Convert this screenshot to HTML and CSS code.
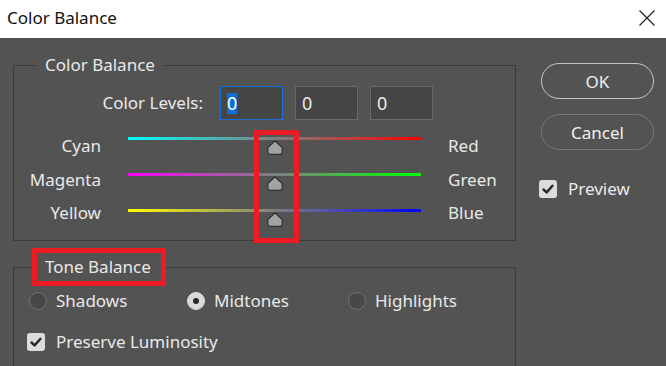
FILE: index.html
```html
<!DOCTYPE html>
<html lang="en">
<head>
<meta charset="utf-8">
<title>Color Balance</title>
<link rel="stylesheet" href="styles.css">
</head>
<body>
<div class="dialog">
  <header class="titlebar">
    <span class="title">Color Balance</span>
    <svg class="close" width="18" height="18" viewBox="0 0 18 18"><path d="M1.5 1.5L16.5 16.5M16.5 1.5L1.5 16.5" stroke="#1a1a1a" stroke-width="1.1" fill="none"/></svg>
  </header>
  <div class="content">
    <div class="main">
      <fieldset class="group cb">
        <legend class="legend">Color Balance</legend>
        <div class="levels">
          <span class="levels-label">Color Levels:</span>
          <div class="num active"><span class="sel">0</span></div>
          <div class="num">0</div>
          <div class="num">0</div>
        </div>
        <div class="sliders">
          <div class="row r1">
            <span class="lbl lbl-l">Cyan</span>
            <div class="track cyan-red">
              <svg class="thumb" width="16" height="15" viewBox="0 0 16 15"><path d="M8 0.8 L15.2 7.6 V12.3 Q15.2 14.3 13.2 14.3 H2.8 Q0.8 14.3 0.8 12.3 V7.6 Z" fill="#a2a2a2" stroke="#2d2d2d" stroke-width="1.2" stroke-linejoin="round"/></svg>
            </div>
            <span class="lbl lbl-r">Red</span>
          </div>
          <div class="row r2">
            <span class="lbl lbl-l">Magenta</span>
            <div class="track magenta-green">
              <svg class="thumb" width="16" height="15" viewBox="0 0 16 15"><path d="M8 0.8 L15.2 7.6 V12.3 Q15.2 14.3 13.2 14.3 H2.8 Q0.8 14.3 0.8 12.3 V7.6 Z" fill="#a2a2a2" stroke="#2d2d2d" stroke-width="1.2" stroke-linejoin="round"/></svg>
            </div>
            <span class="lbl lbl-r">Green</span>
          </div>
          <div class="row r3">
            <span class="lbl lbl-l">Yellow</span>
            <div class="track yellow-blue">
              <svg class="thumb" width="16" height="15" viewBox="0 0 16 15"><path d="M8 0.8 L15.2 7.6 V12.3 Q15.2 14.3 13.2 14.3 H2.8 Q0.8 14.3 0.8 12.3 V7.6 Z" fill="#a2a2a2" stroke="#2d2d2d" stroke-width="1.2" stroke-linejoin="round"/></svg>
            </div>
            <span class="lbl lbl-r">Blue</span>
          </div>
          <div class="mark-thumbs"></div>
        </div>
      </fieldset>
      <fieldset class="group tb">
        <legend class="legend marked">Tone Balance</legend>
        <div class="radios">
          <label class="opt w1"><span class="radio"></span>Shadows</label>
          <label class="opt w2"><span class="radio on"></span>Midtones</label>
          <label class="opt"><span class="radio"></span>Highlights</label>
        </div>
        <label class="check lum">
          <span class="box"><svg width="18" height="18" viewBox="0 0 18 18"><path d="M4.5 9.5L7.6 12.4L13.5 5.8" stroke="#262626" stroke-width="2.4" fill="none" stroke-linecap="round" stroke-linejoin="round"/></svg></span>
          Preserve Luminosity
        </label>
      </fieldset>
    </div>
    <aside class="side">
      <button class="btn ok">OK</button>
      <button class="btn cancel">Cancel</button>
      <label class="check preview">
        <span class="box"><svg width="18" height="18" viewBox="0 0 18 18"><path d="M4.5 9.5L7.6 12.4L13.5 5.8" stroke="#262626" stroke-width="2.4" fill="none" stroke-linecap="round" stroke-linejoin="round"/></svg></span>
        Preview
      </label>
    </aside>
  </div>
</div>
</body>
</html>
```

FILE: styles.css
```css
* { box-sizing: border-box; }

html, body {
  margin: 0;
  height: 100%;
  overflow: hidden;
}

body {
  background: #535353;
  font-family: "Noto Sans", "Open Sans", sans-serif;
  color: #e9e9e9;
  font-size: 17px;
  line-height: 20px;
}

.titlebar {
  height: 38px;
  background: #ffffff;
  display: flex;
  align-items: center;
  justify-content: space-between;
  padding: 0 10px 0 7px;
}

.title {
  color: #111;
  font-size: 17px;
  line-height: 24px;
  margin-top: -2px;
}

.close { margin-top: -3px; }

.content {
  display: flex;
  padding: 17px 0 0 13px;
}

.main {
  width: 503px;
  display: flex;
  flex-direction: column;
}

.group {
  margin: 0;
  padding: 0;
  border: 1px solid #3a3a3a;
  min-width: 0;
}

.legend {
  padding: 0 9px;
  margin-left: 22px;
  line-height: 20px;
  font-size: 17px;
}

.levels {
  display: flex;
  align-items: center;
  margin-top: 11px;
}

.levels-label {
  width: 189px;
  text-align: right;
  margin-right: 17px;
}

.num {
  width: 63px;
  height: 34px;
  background: #454545;
  border: 1px solid #696969;
  margin-right: 12px;
  padding-left: 6px;
  display: flex;
  align-items: center;
  font-size: 18px;
}

.num.active {
  border-color: #1b6fd9;
}

.sel {
  background: #0f6fd6;
  color: #fff;
  line-height: 21px;
}

.sliders {
  position: relative;
  margin-top: 16px;
}

.row {
  display: grid;
  grid-template-columns: 87px 293px auto;
  column-gap: 27px;
  align-items: start;
  height: 36px;
}

.row.r2 .lbl { margin-top: -2px; }
.row.r3 .lbl { margin-top: -5px; }
.row.r3 { height: 32px; }

.lbl-l { text-align: right; }

.track {
  position: relative;
  height: 3px;
  margin-top: 1px;
}

.cyan-red { background: linear-gradient(to right, #00ffff, #ff0000); }
.magenta-green { background: linear-gradient(to right, #ff00ff, #00ff00); }
.yellow-blue { background: linear-gradient(to right, #ffff00, #0000ff); }

.thumb {
  position: absolute;
  top: 3px;
  left: calc(50% - 8px);
  display: block;
}

.mark-thumbs {
  position: absolute;
  left: 240px;
  top: -6px;
  width: 45px;
  height: 113px;
  border: 5px solid #ed1c24;
}

.tb {
  margin-top: 7px;
  padding-bottom: 60px;
}

.legend.marked {
  margin-left: 18px;
  padding: 4px 10px 4px 8px;
  border: 5px solid #ed1c24;
}

.radios {
  display: flex;
  align-items: center;
  margin-top: 5px;
  padding-left: 15px;
}

.opt {
  display: flex;
  align-items: center;
  gap: 9px;
}

.opt.w1 { width: 158px; }
.opt.w2 { width: 161px; }

.radio {
  width: 18px;
  height: 18px;
  border-radius: 50%;
  background: #484848;
  border: 1px solid #717171;
  display: flex;
  align-items: center;
  justify-content: center;
}

.radio.on {
  background: #dadada;
  border-color: #dadada;
}

.radio.on::after {
  content: "";
  width: 6px;
  height: 6px;
  border-radius: 50%;
  background: #2a2a2a;
}

.check {
  display: flex;
  align-items: center;
}

.box {
  width: 18px;
  height: 18px;
  background: #dcdcdc;
  border-radius: 3px;
  display: block;
}

.box svg { display: block; }

.lum {
  margin-top: 21px;
  margin-left: 13px;
  gap: 11px;
}

.side {
  margin-left: 25px;
  width: 113px;
  display: flex;
  flex-direction: column;
  padding-top: 8px;
}

.btn {
  height: 36px;
  border-radius: 18px;
  background: transparent;
  font-family: "Noto Sans", "Open Sans", sans-serif;
  font-size: 17px;
  color: #f0f0f0;
  padding: 0;
}

.ok { border: 1.5px solid #c6c6c6; }

.cancel {
  margin-top: 15px;
  border: 1.5px solid #7a7a7a;
}

.preview {
  margin-top: 29px;
  margin-left: -2px;
  gap: 11px;
  font-size: 17px;
}
```
